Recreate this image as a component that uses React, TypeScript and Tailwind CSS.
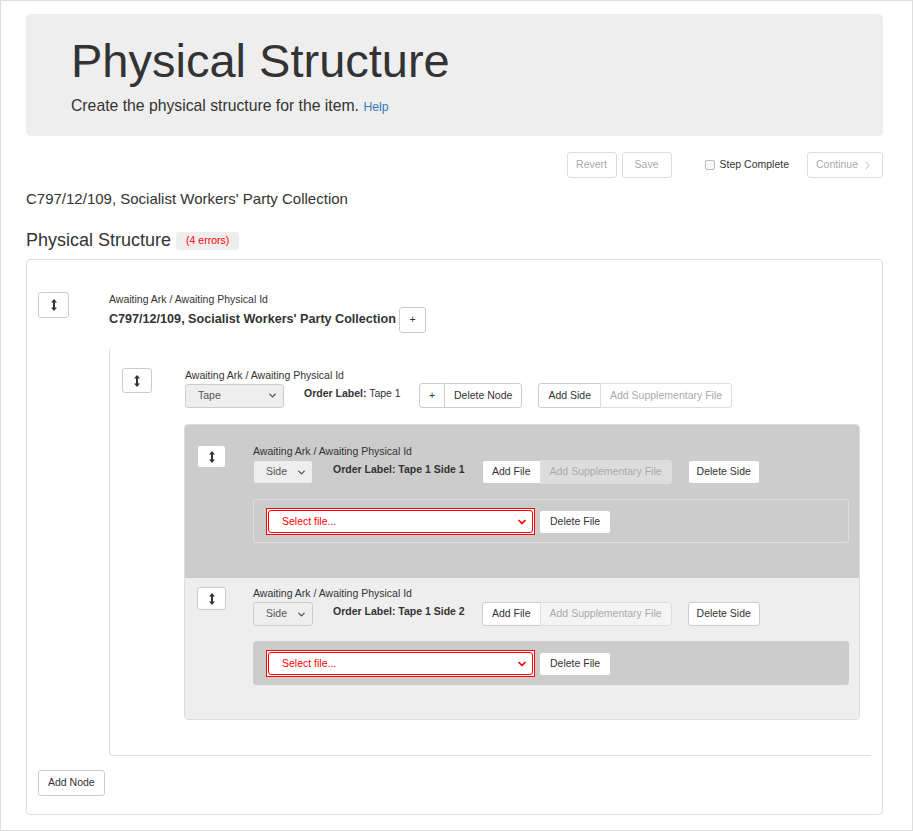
import { ChevronDown, ChevronRight } from 'lucide-react';

function DragIcon() {
  return (
    <svg width="6" height="12" viewBox="0 0 6 12" className="text-[#333]">
      <polygon points="3,0 6,3.5 0,3.5" fill="currentColor" />
      <rect x="2" y="3" width="2" height="6" fill="currentColor" />
      <polygon points="3,12 6,8.5 0,8.5" fill="currentColor" />
    </svg>
  );
}

function DragButton({ size }: { size: 'lg' | 'md' | 'sm' }) {
  const cls =
    size === 'lg' ? 'w-[31px] h-[26px]' : size === 'md' ? 'w-[30px] h-[25px]' : 'w-[29px] h-[23px]';
  return (
    <button className={`${cls} flex items-center justify-center bg-white border border-[#ccc] rounded-[3px]`}>
      <DragIcon />
    </button>
  );
}

function Btn({ children, className = '' }: { children: React.ReactNode; className?: string }) {
  return (
    <button className={`h-[25px] px-[9px] border border-[#ccc] bg-white text-[#333] text-[10.5px] whitespace-nowrap ${className}`}>
      {children}
    </button>
  );
}

function FileSelect() {
  return (
    <div className="w-[269px] h-[27px] border border-[#f00] p-[1px] bg-white">
      <div className="h-full border border-[#f00] rounded-[3px] flex items-center justify-between pl-[13px] pr-[4px] text-[#f00] text-[10.5px]">
        <span>Select file...</span>
        <ChevronDown size={12} strokeWidth={3.5} className="text-[#f00]" />
      </div>
    </div>
  );
}

function SideNode({ label, selected }: { label: string; selected: boolean }) {
  return (
    <div className={`flex pl-[12px] pr-[10px] ${selected ? 'bg-[#ccc] pt-[19px] pb-[35px]' : 'bg-[#eee] pt-[8px] pb-[34px]'}`}>
      <div className="w-[56px] shrink-0 pt-[1px]">
        <DragButton size="sm" />
      </div>
      <div className="flex-1">
        <p className="text-[10.5px] leading-[14px]">Awaiting Ark / Awaiting Physical Id</p>
        <div className="flex items-center mt-[2px] h-[24px]">
          <div className="w-[60px] h-[24px] rounded-[3px] bg-[#eee] border border-[#ccc] flex items-center justify-between pl-[12px] pr-[5px] text-[#555] text-[10.5px]">
            <span>Side</span>
            <ChevronDown size={11} strokeWidth={3} className="text-[#555]" />
          </div>
          <span className="ml-[20px] text-[10.5px] font-bold -mt-[4px] w-[149px] whitespace-nowrap">Order Label: {label}</span>
          <div className="flex">
            <Btn className="rounded-l-[3px] !h-[24px]">Add File</Btn>
            <button
              className={`h-[24px] px-[9px] text-[10.5px] text-[#aaa] border whitespace-nowrap rounded-r-[3px] -ml-px ${
                selected ? 'bg-[#ddd] border-[#ddd]' : 'bg-[#f4f4f4] border-[#ddd]'
              }`}
            >
              Add Supplementary File
            </button>
          </div>
          <Btn className="ml-[16px] rounded-[3px] !h-[24px] !px-[8px]">Delete Side</Btn>
        </div>
        <div
          className={`mt-[15px] rounded-[3px] flex items-center gap-[4px] pl-[12px] pt-[8px] pb-[7px] ${
            selected ? 'border border-[#ddd]' : 'bg-[#ccc] border border-[#ccc]'
          }`}
        >
          <FileSelect />
          <Btn className="rounded-[3px] !h-[24px] !px-[10px]">Delete File</Btn>
        </div>
      </div>
    </div>
  );
}

export default function App() {
  return (
    <div
      className="min-h-[831px] border border-[#ddd] bg-white text-[#333] pl-[25px] pr-[29px] pt-[13px]"
      style={{ fontFamily: '"Liberation Sans", Arial, sans-serif' }}
    >
      {/* Jumbotron */}
      <div className="bg-[#eee] rounded-[5px] pl-[45px] pt-[23px] pb-[19px]">
        <h1 className="text-[47px] leading-[48px] text-[#333]">Physical Structure</h1>
        <p className="mt-[11px] text-[15.75px] leading-[20px]">
          Create the physical structure for the item.{' '}
          <a className="text-[12.25px] text-[#337ab7]">Help</a>
        </p>
      </div>

      {/* Toolbar */}
      <div className="mt-[16px] flex items-center justify-end h-[26px] text-[10.5px]">
        <button className="w-[50px] h-[26px] border border-[#ddd] rounded-[3px] text-[#aaa]">Revert</button>
        <button className="ml-[5px] w-[50px] h-[26px] border border-[#ddd] rounded-[3px] text-[#aaa]">Save</button>
        <label className="ml-[33px] flex items-center gap-[5px]">
          <span className="w-[10px] h-[10px] border border-[#bbb] rounded-[2px] bg-[#f8f8f8]" />
          <span>Step Complete</span>
        </label>
        <button className="ml-[18px] w-[76px] h-[26px] border border-[#ddd] rounded-[3px] text-[#aaa] flex items-center justify-center gap-[3px]">
          Continue <ChevronRight size={13} strokeWidth={1.5} className="text-[#aaa]" />
        </button>
      </div>

      <p className="mt-[11px] text-[15px] leading-[20px]">C797/12/109, Socialist Workers' Party Collection</p>

      <div className="mt-[19px] flex items-center h-[24px]">
        <h2 className="text-[18px] leading-[24px]">Physical Structure</h2>
        <span className="ml-[5px] mt-[2px] h-[18px] px-[10px] flex items-center bg-[#eee] rounded-[3px] text-[#f00] text-[10.5px]">
          (4 errors)
        </span>
      </div>

      {/* Panel */}
      <div className="mt-[7px] border border-[#ddd] rounded-[4px] px-[11px] pt-[32px] pb-[18px]">
        <div className="flex">
          <div className="w-[71px] shrink-0">
            <DragButton size="lg" />
          </div>
          <div className="flex-1">
            <p className="text-[10.5px] leading-[14px]">Awaiting Ark / Awaiting Physical Id</p>
            <div className="flex items-center h-[26px] mt-[1px]">
              <span className="text-[12.6px] font-bold -mt-[2px]">C797/12/109, Socialist Workers' Party Collection</span>
              <button className="ml-[3px] w-[27px] h-[26px] border border-[#ccc] rounded-[3px] bg-white text-[10.5px]">+</button>
            </div>

            {/* Child node */}
            <div className="mt-[16px] border-l border-b border-[#ddd] rounded-bl-[4px] pl-[12px] pr-[12px] pt-[19px] pb-[35px] flex">
              <div className="w-[63px] shrink-0">
                <DragButton size="md" />
              </div>
              <div className="flex-1">
                <p className="text-[10.5px] leading-[14px]">Awaiting Ark / Awaiting Physical Id</p>
                <div className="flex items-center mt-[1px] h-[25px]">
                  <div className="w-[99px] h-[24px] rounded-[3px] bg-[#eee] border border-[#ccc] flex items-center justify-between pl-[12px] pr-[5px] text-[#555] text-[10.5px]">
                    <span>Tape</span>
                    <ChevronDown size={11} strokeWidth={3} className="text-[#555]" />
                  </div>
                  <span className="ml-[20px] w-[115px] text-[10.5px] -mt-[4px] whitespace-nowrap">
                    <b>Order Label:</b> Tape 1
                  </span>
                  <div className="flex">
                    <Btn className="rounded-l-[3px] w-[26px] !px-0">+</Btn>
                    <Btn className="rounded-r-[3px] -ml-px">Delete Node</Btn>
                  </div>
                  <div className="flex ml-[16px]">
                    <Btn className="rounded-l-[3px]">Add Side</Btn>
                    <button className="h-[25px] px-[9px] -ml-px border border-[#ddd] rounded-r-[3px] bg-white text-[#aaa] text-[10.5px] whitespace-nowrap">
                      Add Supplementary File
                    </button>
                  </div>
                </div>

                <div className="mt-[16px] rounded-[4px] overflow-hidden border border-[#ddd] -mx-px">
                  <SideNode label="Tape 1 Side 1" selected />
                  <SideNode label="Tape 1 Side 2" selected={false} />
                </div>
              </div>
            </div>
          </div>
        </div>

        <button className="mt-[14px] h-[26px] px-[9px] border border-[#ccc] rounded-[3px] bg-white text-[10.5px]">Add Node</button>
      </div>
    </div>
  );
}
